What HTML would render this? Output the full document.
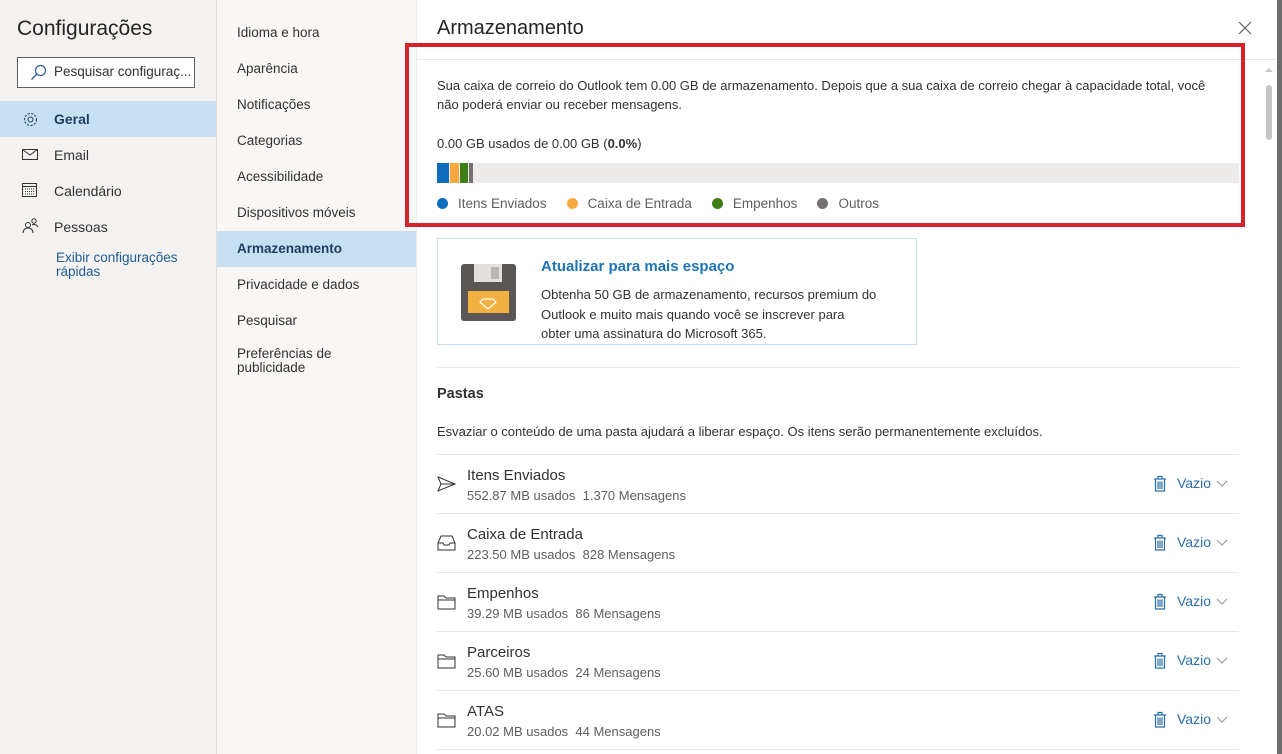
<!DOCTYPE html>
<html><head><meta charset="utf-8"><style>
*{margin:0;padding:0;box-sizing:border-box}
body{width:1282px;height:754px;overflow:hidden;font-family:"Segoe UI","Liberation Sans",sans-serif;color:#323130;background:#fff;position:relative;font-size:14px}
.abs{position:absolute}
#left{left:0;top:0;width:217px;height:754px;background:#f3f2f1;border-right:1px solid #e1dfdd}
#mid{left:217px;top:0;width:200px;height:754px;background:#f8f7f6;border-right:1px solid #edebe9}
#right{left:417px;top:0;width:860px;height:754px;background:#fff}
.nav{position:absolute;left:0;width:216px;height:36px;line-height:36px;padding-left:54px;font-size:14px}
.sel{background:#c7dff3;color:#1f3e5e;font-weight:600}
.m{position:absolute;left:0;width:199px;padding-left:20px;font-size:13.5px;line-height:16px}
.t{font-size:13px;color:#323130}
.row{position:absolute;left:20px;width:802px;height:59px;border-top:1px solid #e6e6e6}
.row .n{position:absolute;left:30px;top:12px;font-size:15px}
.row .s{position:absolute;left:30px;top:33px;font-size:13px;color:#605e5c}
.row .v{position:absolute;left:740px;top:20px;font-size:14px;color:#2a6fa8}
.row svg.ic{position:absolute;left:0;top:20px}
.dot{display:inline-block;width:11px;height:11px;border-radius:50%;margin-right:10px;vertical-align:-1px}
</style></head><body>
<div id="left" class="abs">
 <div class="abs" style="left:17px;top:17px;font-size:21px;color:#252423">Configurações</div>
 <div class="abs" style="left:17px;top:57px;width:178px;height:31px;border:1px solid #605e5c;background:#fff">
  <svg class="abs" style="left:12px;top:6px" width="17" height="17" viewBox="0 0 17 17"><circle cx="10.5" cy="6.5" r="5" fill="none" stroke="#2b5d9b" stroke-width="1.2"/><path d="M7 10L1.5 15.5" stroke="#2b5d9b" stroke-width="1.3"/></svg>
  <span class="abs" style="left:36px;top:6px;font-size:13.5px;color:#323130">Pesquisar configuraç...</span>
 </div>
 <div class="nav sel" style="top:101px">Geral</div>
 <svg class="abs" style="left:22px;top:111px" width="17" height="17" viewBox="0 0 17 17"><circle cx="8.5" cy="8.5" r="2.5" fill="none" stroke="#1f3e5e"/><circle cx="8.5" cy="8.5" r="6" fill="none" stroke="#1f3e5e" stroke-dasharray="2.2 1.4"/></svg>
 <div class="nav" style="top:137px">Email</div>
 <svg class="abs" style="left:22px;top:149px" width="17" height="12" viewBox="0 0 17 12"><rect x=".5" y=".5" width="15" height="10" fill="none" stroke="#323130"/><path d="M.5 .5L8 6L15.5 .5" fill="none" stroke="#323130"/></svg>
 <div class="nav" style="top:173px">Calendário</div>
 <svg class="abs" style="left:22px;top:183px" width="16" height="15" viewBox="0 0 16 15"><rect x=".5" y=".5" width="14" height="13" fill="none" stroke="#323130"/><path d="M.5 3.5H14.5" stroke="#323130"/><path d="M3 6h9M3 8.5h9M3 11h9" stroke="#323130" stroke-dasharray="1 1"/></svg>
 <div class="nav" style="top:209px">Pessoas</div>
 <svg class="abs" style="left:22px;top:218px" width="18" height="16" viewBox="0 0 18 16"><circle cx="6" cy="7" r="2.5" fill="none" stroke="#323130"/><path d="M1 15c0-3 2-5 5-5s5 2 5 5" fill="none" stroke="#323130"/><circle cx="12" cy="3" r="2.2" fill="none" stroke="#323130"/><path d="M10 7c1-1 4-1 6 2" fill="none" stroke="#323130"/></svg>
 <div class="abs" style="left:56px;top:251px;font-size:13.5px;line-height:14px;color:#1f5b92">Exibir configurações<br>rápidas</div>
</div>
<div id="mid" class="abs">
 <div class="m" style="top:25px">Idioma e hora</div>
 <div class="m" style="top:61px">Aparência</div>
 <div class="m" style="top:97px">Notificações</div>
 <div class="m" style="top:133px">Categorias</div>
 <div class="m" style="top:169px">Acessibilidade</div>
 <div class="m" style="top:205px">Dispositivos móveis</div>
 <div class="m sel" style="top:231px;height:36px;line-height:36px;padding-left:20px">Armazenamento</div>
 <div class="m" style="top:277px">Privacidade e dados</div>
 <div class="m" style="top:313px">Pesquisar</div>
 <div class="m" style="top:347px;line-height:14px">Preferências de<br>publicidade</div>
</div>
<div id="right" class="abs">
 <div class="abs" style="left:20px;top:17px;font-size:20px;color:#252423">Armazenamento</div>
 <svg class="abs" style="left:821px;top:21px" width="14" height="14" viewBox="0 0 14 14"><path d="M1 1L13 13M13 1L1 13" stroke="#605e5c" stroke-width="1.2"/></svg>
 <div class="abs" style="left:0;top:59px;width:860px;height:1px;background:#e8e8e8"></div>
 <div class="abs t" style="left:20px;top:76px;line-height:19px;width:785px">Sua caixa de correio do Outlook tem 0.00 GB de armazenamento. Depois que a sua caixa de correio chegar à capacidade total, você não poderá enviar ou receber mensagens.</div>
 <div class="abs t" style="left:20px;top:136px">0.00 GB usados de 0.00 GB (<b>0.0%</b>)</div>
 <div class="abs" style="left:20px;top:163px;width:802px;height:20px;background:#edebe9"></div>
 <div class="abs" style="left:20px;top:163px;width:12px;height:20px;background:#0f6cbd"></div>
 <div class="abs" style="left:33px;top:163px;width:9px;height:20px;background:#f7a940"></div>
 <div class="abs" style="left:43px;top:163px;width:8px;height:20px;background:#3f7d15"></div>
 <div class="abs" style="left:52px;top:163px;width:4px;height:20px;background:#767171"></div>
 <div class="abs t" style="left:20px;top:196px;color:#605e5c;font-size:13.5px"><span class="dot" style="background:#0f6cbd"></span>Itens Enviados<span class="dot" style="background:#f7a940;margin-left:20px"></span>Caixa de Entrada<span class="dot" style="background:#3f7d15;margin-left:20px"></span>Empenhos<span class="dot" style="background:#767171;margin-left:20px"></span>Outros</div>
 <div class="abs" style="left:20px;top:238px;width:480px;height:107px;border:1px solid #c8dde8"></div>
 <svg class="abs" style="left:44px;top:264px" width="55" height="57" viewBox="0 0 55 57"><rect x="0" y="0" width="55" height="57" rx="3" fill="#5a5756"/><rect x="13" y="0" width="28" height="18" fill="#e2e0df"/><rect x="30" y="3" width="8" height="12" fill="#b9b6b4"/><rect x="7" y="27" width="41" height="22" fill="#f2b141"/><path d="M22 35h10l3 3-8 7-8-7z" fill="none" stroke="#fff" stroke-width="1.2"/></svg>
 <div class="abs" style="left:124px;top:258px;font-size:15px;font-weight:600;color:#1e74b5">Atualizar para mais espaço</div>
 <div class="abs t" style="left:124px;top:285px;line-height:19.5px;white-space:nowrap">Obtenha 50 GB de armazenamento, recursos premium do<br>Outlook e muito mais quando você se inscrever para<br>obter uma assinatura do Microsoft 365.</div>
 <div class="abs" style="left:20px;top:367px;width:802px;height:1px;background:#eaeaea"></div>
 <div class="abs" style="left:20px;top:386px;font-size:14.5px;font-weight:600">Pastas</div>
 <div class="abs t" style="left:20px;top:424px">Esvaziar o conteúdo de uma pasta ajudará a liberar espaço. Os itens serão permanentemente excluídos.</div>

 <div class="row" style="top:454px"><svg class="ic" width="20" height="18" viewBox="0 0 20 18"><path d="M1 2L18 9L1 16L4 9Z M4 9H18" fill="none" stroke="#323130"/></svg><div class="n">Itens Enviados</div><div class="s">552.87 MB usados &nbsp;1.370 Mensagens</div><div class="v">Vazio</div></div>
 <div class="row" style="top:513px"><svg class="ic" width="20" height="18" viewBox="0 0 20 18"><path d="M1 9L4 2H15L18 9V16H1Z M1 9H6L7 11H12L13 9H18" fill="none" stroke="#323130"/></svg><div class="n">Caixa de Entrada</div><div class="s">223.50 MB usados &nbsp;828 Mensagens</div><div class="v">Vazio</div></div>
 <div class="row" style="top:572px"><svg class="ic" width="20" height="18" viewBox="0 0 20 18"><path d="M1 3H7L9 5H18V16H1Z M1 7H18" fill="none" stroke="#323130"/></svg><div class="n">Empenhos</div><div class="s">39.29 MB usados &nbsp;86 Mensagens</div><div class="v">Vazio</div></div>
 <div class="row" style="top:631px"><svg class="ic" width="20" height="18" viewBox="0 0 20 18"><path d="M1 3H7L9 5H18V16H1Z M1 7H18" fill="none" stroke="#323130"/></svg><div class="n">Parceiros</div><div class="s">25.60 MB usados &nbsp;24 Mensagens</div><div class="v">Vazio</div></div>
 <div class="row" style="top:690px"><svg class="ic" width="20" height="18" viewBox="0 0 20 18"><path d="M1 3H7L9 5H18V16H1Z M1 7H18" fill="none" stroke="#323130"/></svg><div class="n">ATAS</div><div class="s">20.02 MB usados &nbsp;44 Mensagens</div><div class="v">Vazio</div></div>
 <div class="abs" style="left:20px;top:749px;width:802px;height:1px;background:#e6e6e6"></div>
</div>
<svg class="abs" style="left:1153px;top:475px" width="80" height="260" viewBox="0 0 80 260">
 <g id="tr" fill="none" stroke="#2a6fa8" stroke-width="1.2"><path d="M1 4H13M5 4V1.5H9V4M2.5 4V16H11.5V4M5 6.5V14M7 6.5V14M9 6.5V14"/><path d="M64 6L69 11L74 6" stroke="#a19f9d"/></g>
 <use href="#tr" y="59"/><use href="#tr" y="118"/><use href="#tr" y="177"/><use href="#tr" y="236"/>
</svg>
<div class="abs" style="left:1266px;top:85px;width:6px;height:55px;background:#c8c6c4;border-radius:3px"></div>
<div class="abs" style="left:1265px;top:68px;width:0;height:0;border-left:4px solid transparent;border-right:4px solid transparent;border-bottom:4px solid #c8c6c4"></div>
<div class="abs" style="left:1277px;top:0;width:5px;height:754px;background:#6d6d6d"></div>
<div class="abs" style="left:405px;top:43px;width:840px;height:184px;border:4px solid #d6222d"></div>
</body></html>
